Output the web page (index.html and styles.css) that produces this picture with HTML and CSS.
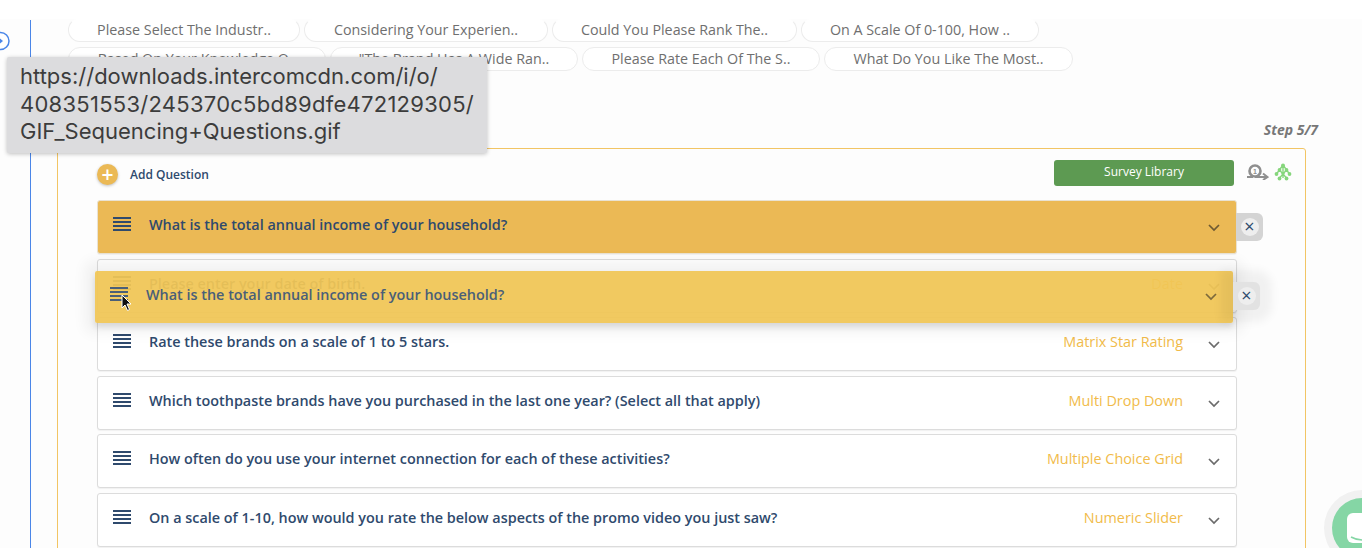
FILE: index.html
```html
<!DOCTYPE html>
<html lang="en">
  <head>
    <meta charset="UTF-8" />
    <title>Survey Questions</title>
    <link rel="stylesheet" href="styles.css">
  </head>
  <body>
    <div class="page">
      <div class="rail">
        <svg class="rail-toggle" width="12" height="20" viewBox="0 0 12 20"><circle cx="0.5" cy="10" r="8.5" fill="#fff" stroke="#4a86e8" stroke-width="1.5"/><path d="M0 7.5 L3 10 L0 12.5 Z" fill="#4a86e8"/></svg>
      </div>

      <div class="chips">
        <div class="chip-row">
          <span class="chip w1">Please Select The Industr..</span>
          <span class="chip w2">Considering Your Experien..</span>
          <span class="chip w3">Could You Please Rank The..</span>
          <span class="chip w4">On A Scale Of 0-100, How ..</span>
        </div>
        <div class="chip-row">
          <span class="chip w5">Based On Your Knowledge O..</span>
          <span class="chip w6">"The Brand Has A Wide Ran..</span>
          <span class="chip w7">Please Rate Each Of The S..</span>
          <span class="chip w8">What Do You Like The Most..</span>
        </div>
      </div>

      <div class="step">Step 5/7</div>

      <div class="panel">
        <div class="panel-head">
          <div class="add">
            <span class="add-icon">+</span>
            <span>Add Question</span>
          </div>
          <div class="tools">
            <button class="library">Survey Library</button>
            <svg class="tool-icon" width="22" height="16" viewBox="0 0 22 16"><circle cx="8" cy="7" r="5.5" fill="none" stroke="#8f8f8f" stroke-width="2.6"/><text x="8" y="9.5" font-size="7" font-weight="700" text-anchor="middle" fill="#8f8f8f" font-family="Liberation Sans">1</text><path d="M0 13 H6 M8 13 H19 M16 9.5 L20.5 13 L16 16" fill="none" stroke="#8f8f8f" stroke-width="2"/></svg>
            <svg class="tool-icon" width="18" height="18" viewBox="0 0 18 18"><g fill="none" stroke="#86d67c" stroke-width="1.4"><path d="M9 2 L2.5 11 M9 2 L15.5 11 M9 2 V15 M5.5 7 L9 11 L12.5 7 M5.5 15 L9 11 L12.5 15"/></g><g fill="#86d67c"><circle cx="9" cy="2.5" r="2"/><circle cx="5.5" cy="7" r="1.9"/><circle cx="12.5" cy="7" r="1.9"/><circle cx="2.5" cy="11" r="1.9"/><circle cx="15.5" cy="11" r="1.9"/><circle cx="9" cy="10.5" r="1.6"/><circle cx="5.5" cy="15.5" r="1.9"/><circle cx="12.5" cy="15.5" r="1.9"/></g></svg>
          </div>
        </div>

        <div class="question-list">
          <div class="question active">
            <svg class="grip" width="18" height="15" viewBox="0 0 18 15"><path d="M0 1 H18 M0 5 H18 M0 9 H18 M0 13 H18" stroke="#2f4a6d" stroke-width="1.8"/></svg>
            <span class="q-title">What is the total annual income of your household?</span>
            <svg class="chevron" width="12" height="8" viewBox="0 0 12 8"><path d="M1 1 L6 6 L11 1" fill="none" stroke="#6e5a32" stroke-width="1.7"/></svg>
            <div class="remove-tab"><span class="remove">×</span></div>
          </div>
          <div class="question faded">
            <svg class="grip" width="18" height="15" viewBox="0 0 18 15"><path d="M0 1 H18 M0 5 H18 M0 9 H18 M0 13 H18" stroke="#2f4a6d" stroke-width="1.8"/></svg>
            <span class="q-title">Please enter your date of birth.</span>
            <span class="q-type">Date</span>
            <svg class="chevron" width="12" height="8" viewBox="0 0 12 8"><path d="M1 1 L6 6 L11 1" fill="none" stroke="#6b6b6b" stroke-width="1.7"/></svg>
          </div>
          <div class="question">
            <svg class="grip" width="18" height="15" viewBox="0 0 18 15"><path d="M0 1 H18 M0 5 H18 M0 9 H18 M0 13 H18" stroke="#2f4a6d" stroke-width="1.8"/></svg>
            <span class="q-title">Rate these brands on a scale of 1 to 5 stars.</span>
            <span class="q-type">Matrix Star Rating</span>
            <svg class="chevron" width="12" height="8" viewBox="0 0 12 8"><path d="M1 1 L6 6 L11 1" fill="none" stroke="#6b6b6b" stroke-width="1.7"/></svg>
          </div>
          <div class="question">
            <svg class="grip" width="18" height="15" viewBox="0 0 18 15"><path d="M0 1 H18 M0 5 H18 M0 9 H18 M0 13 H18" stroke="#2f4a6d" stroke-width="1.8"/></svg>
            <span class="q-title">Which toothpaste brands have you purchased in the last one year? (Select all that apply)</span>
            <span class="q-type">Multi Drop Down</span>
            <svg class="chevron" width="12" height="8" viewBox="0 0 12 8"><path d="M1 1 L6 6 L11 1" fill="none" stroke="#6b6b6b" stroke-width="1.7"/></svg>
          </div>
          <div class="question">
            <svg class="grip" width="18" height="15" viewBox="0 0 18 15"><path d="M0 1 H18 M0 5 H18 M0 9 H18 M0 13 H18" stroke="#2f4a6d" stroke-width="1.8"/></svg>
            <span class="q-title">How often do you use your internet connection for each of these activities?</span>
            <span class="q-type">Multiple Choice Grid</span>
            <svg class="chevron" width="12" height="8" viewBox="0 0 12 8"><path d="M1 1 L6 6 L11 1" fill="none" stroke="#6b6b6b" stroke-width="1.7"/></svg>
          </div>
          <div class="question">
            <svg class="grip" width="18" height="15" viewBox="0 0 18 15"><path d="M0 1 H18 M0 5 H18 M0 9 H18 M0 13 H18" stroke="#2f4a6d" stroke-width="1.8"/></svg>
            <span class="q-title">On a scale of 1-10, how would you rate the below aspects of the promo video you just saw?</span>
            <span class="q-type">Numeric Slider</span>
            <svg class="chevron" width="12" height="8" viewBox="0 0 12 8"><path d="M1 1 L6 6 L11 1" fill="none" stroke="#6b6b6b" stroke-width="1.7"/></svg>
          </div>
        </div>
      </div>

      <!-- row being dragged -->
      <div class="drag-row">
        <svg class="grip" width="18" height="15" viewBox="0 0 18 15"><path d="M0 1 H18 M0 5 H18 M0 9 H18 M0 13 H18" stroke="#4a5f78" stroke-width="1.8"/></svg>
        <span class="q-title">What is the total annual income of your household?</span>
        <svg class="chevron" width="12" height="8" viewBox="0 0 12 8"><path d="M1 1 L6 6 L11 1" fill="none" stroke="#7d6a3c" stroke-width="1.7"/></svg>
        <div class="remove-tab drag-remove"><span class="remove">×</span></div>
      </div>
      <svg class="cursor" width="12" height="18" viewBox="0 0 12 18"><path d="M1 1 V14 L4 11 L6.5 16.5 L8.5 15.5 L6 10 H10 Z" fill="#111" stroke="#fff" stroke-width="1"/></svg>

      <div class="url-tip">https://downloads.intercomcdn.com/i/o/<br><span class="tip-ids">408351553/245370c5bd89dfe472129305/</span><br>GIF_Sequencing+Questions.gif</div>

      <div class="chat-bubble">
        <svg class="chat-face" width="30" height="30" viewBox="0 0 30 30"><rect width="30" height="30" rx="6" fill="#fff"/><path d="M4 24 Q15 30 26 24" fill="none" stroke="#85d6a5" stroke-width="1.6"/></svg>
      </div>
    </div>
  </body>
</html>
```

FILE: styles.css
```css
html,
body {
  margin: 0;
  height: 100%;
  overflow: hidden;
}
body {
  font-family: "Open Sans", sans-serif;
  background-color: #fff;
  color: #2f4a6d;
}
.page {
  position: relative;
  width: 1362px;
  height: 548px;
  overflow: hidden;
  background: linear-gradient(#fff 19px, #fdfdfd 19px);
}
.rail {
  position: absolute;
  left: 0;
  top: 20px;
  bottom: 0;
  width: 30px;
  border-right: 1px solid #4a86e8;
}
.rail-toggle {
  position: absolute;
  left: 0;
  top: 11px;
}

/* chips */
.chips {
  padding: 18px 0 0 68px;
  display: flex;
  flex-direction: column;
  gap: 5px;
}
.chip-row {
  display: flex;
  gap: 4px;
}
.chip {
  height: 22px;
  line-height: 22px;
  border: 1px solid #ececec;
  border-radius: 12px;
  background-color: #fff;
  color: #6f6f6f;
  font-size: 14.3px;
  text-align: center;
  white-space: nowrap;
}
.chip-row:first-child .chip {
  border-top-color: transparent;
}
.w1 { width: 230px; }
.w2 { width: 242px; }
.w3 { width: 243px; }
.w4 { width: 236px; }
.w5 { width: 256px; }
.w6 { width: 246px; }
.w7 { width: 236px; }
.w8 { width: 247px; }

.step {
  position: absolute;
  right: 44px;
  top: 120px;
  color: #777;
  font-size: 14px;
  font-weight: 700;
  font-style: italic;
}

/* panel */
.panel {
  position: absolute;
  left: 57px;
  top: 148px;
  width: 1249px;
  height: 420px;
  box-sizing: border-box;
  border: 1px solid #f2c564;
  border-radius: 3px;
  padding: 0 39px;
}
.panel-head {
  display: flex;
  justify-content: space-between;
  align-items: center;
  width: 1200px;
  height: 51px;
}
.add {
  display: flex;
  align-items: center;
  gap: 12px;
  font-size: 12px;
  font-weight: 600;
  color: #2f4a6d;
}
.add-icon {
  width: 21px;
  height: 21px;
  border-radius: 50%;
  background-color: #ebb955;
  color: #fff;
  font-size: 21px;
  line-height: 20px;
  text-align: center;
  box-shadow: 0 1px 3px rgba(0, 0, 0, 0.25);
}
.tools {
  display: flex;
  align-items: center;
  margin-top: -3px;
}
.library {
  width: 180px;
  height: 26px;
  padding: 0 0 3px;
  background-color: #5d9a52;
  color: white;
  border: none;
  border-radius: 3px;
  font-family: "Open Sans", sans-serif;
  font-size: 12px;
  margin-right: 13px;
}
.tool-icon {
  margin: -2px 5px 0 0;
}

/* question rows */
.question-list {
  display: flex;
  flex-direction: column;
  gap: 4.6px;
  width: 1140px;
}
.question,
.drag-row {
  display: flex;
  align-items: center;
  height: 54px;
  box-sizing: border-box;
  padding: 0 16px 0 15px;
  border-radius: 3px;
  position: relative;
}
.question {
  border: 1px solid #dcdcdc;
  background-color: #fff;
  box-shadow: 0 1px 1px rgba(0, 0, 0, 0.05);
}
.question.active {
  background-color: #ebb955;
  border-color: #e9e2d2;
}
.grip,
.q-title,
.q-type {
  margin-bottom: 5px;
}
.q-title {
  flex: 1;
  margin-left: 18px;
  font-size: 14.4px;
  font-weight: 600;
  color: #2f4a6d;
}
.q-type {
  color: #f1bb4a;
  font-size: 14.4px;
  margin-right: 25px;
}
.chevron {
  flex: none;
  margin-top: 2px;
}
.remove-tab {
  position: absolute;
  left: 100%;
  top: 12px;
  width: 27px;
  height: 28px;
  background-color: #d4d4d4;
  border-radius: 0 6px 6px 0;
  display: flex;
  align-items: center;
  justify-content: center;
}
.remove {
  width: 18px;
  height: 18px;
  border-radius: 50%;
  background-color: #eee;
  color: #2f4a6d;
  font-size: 18px;
  line-height: 17px;
  text-align: center;
}

.drag-row {
  position: absolute;
  left: 95px;
  top: 271px;
  width: 1138px;
  height: 52px;
  background-color: rgba(240, 198, 86, 0.94);
  box-shadow: 0 0 14px 10px rgba(0, 0, 0, 0.05), 0 4px 6px rgba(0, 0, 0, 0.12);
  border-radius: 2px;
}
.drag-row .q-title {
  color: #4a5f78;
}
.drag-row .chevron {
  margin-top: 0;
}
.drag-remove {
  background-color: #e2e2e2;
  top: 11px;
  box-shadow: 0 0 10px 12px rgba(0, 0, 0, 0.05);
}
.cursor {
  position: absolute;
  left: 121px;
  top: 294px;
}

/* tooltip */
.url-tip {
  position: absolute;
  left: 7px;
  top: 57px;
  width: 480px;
  height: 96px;
  box-sizing: border-box;
  padding: 6px 13px;
  background-color: #dcdcde;
  border-radius: 2px;
  box-shadow: 0 1px 4px rgba(0, 0, 0, 0.25);
  color: #3c3c3c;
  font-family: Inter, "Liberation Sans", sans-serif;
  font-size: 22px;
  line-height: 27.5px;
  white-space: nowrap;
}
.tip-ids {
  letter-spacing: 0.26px;
}

.chat-bubble {
  position: absolute;
  left: 1332px;
  top: 498px;
  width: 60px;
  height: 60px;
  border-radius: 50%;
  background-color: #85d6a5;
  box-shadow: 0 0 0 8px #f1f1f1;
}
.chat-face {
  position: absolute;
  left: 15px;
  top: 15px;
}
```
